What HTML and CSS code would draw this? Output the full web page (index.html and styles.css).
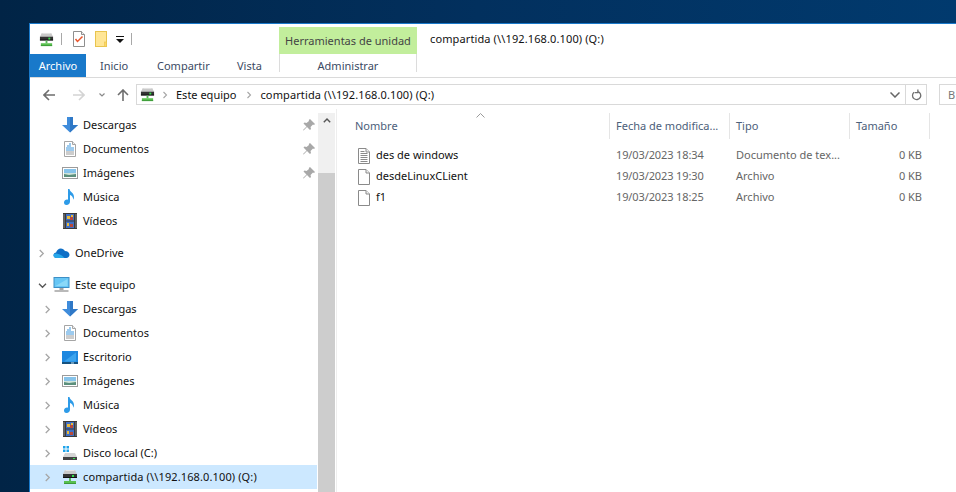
FILE: index.html
```html
<!DOCTYPE html>
<html lang="es">
<head>
    <meta charset="UTF-8">
    <title>compartida (\\192.168.0.100) (Q:)</title>
    <link rel="stylesheet" href="styles.css">
</head>
<body>
<svg class="sprite" xmlns="http://www.w3.org/2000/svg">
    <defs>
        <symbol id="i-net" viewBox="0 0 16 16">
            <path d="M3 1h10l2 4H1z" fill="#c9c9c9"/>
            <path d="M3.500 1.500h9" stroke="#e6e6e6"/>
            <rect x="1" y="5" width="14" height="4" fill="#333"/>
            <rect x="1" y="8" width="14" height="1" fill="#111"/>
            <rect x="10" y="6" width="2" height="2" fill="#35e04a"/>
            <rect x="7" y="9" width="2" height="3" fill="#5cb85c"/>
            <rect x="2" y="12" width="12" height="3" fill="#58c04e"/>
            <rect x="2" y="14" width="12" height="1" fill="#3d9a3a"/>
        </symbol>
        <symbol id="i-down" viewBox="0 0 16 16">
            <path d="M5 0h6v8h5l-8 7.500L0 8h5z" fill="#3f8cdb"/>
            <path d="M8 0h3v8h5l-8 7.500z" fill="#2f78c6"/>
        </symbol>
        <symbol id="i-docs" viewBox="0 0 16 16">
            <path d="M2.500.5h8l3 3v12h-11z" fill="#fff" stroke="#a5a5a5"/>
            <path d="M10.500.5v3h3" fill="#eee" stroke="#a5a5a5"/>
            <path d="M7 3h2M5 5h4M4 7h8M4 9h8" stroke="#3a96dd"/>
            <path d="M4 11h8M4 13h8" stroke="#9a9a9a"/>
        </symbol>
        <symbol id="i-img" viewBox="0 0 16 16">
            <rect x=".5" y="2.500" width="15" height="11" fill="#fff" stroke="#9b9b9b"/>
            <rect x="2" y="4" width="12" height="4" fill="#86c3ea"/>
            <rect x="2" y="8" width="12" height="2" fill="#cfe3da"/>
            <path d="M2 9l5 1 7-1v3H2z" fill="#5c8f7c"/>
        </symbol>
        <symbol id="i-music" viewBox="0 0 16 16">
            <path d="M6 0h1.500c.3 3 4.500 3.500 4.500 8 0 1-.3 2-.8 2.800.2-2.800-1.700-4.300-3.200-4.800v6.500c0 2-1.500 3.500-3.500 3.500S2 14.800 2 13.300s1.600-2.800 3-2.800c.4 0 .7 0 1 .2z" fill="#2d9be8"/>
        </symbol>
        <symbol id="i-film" viewBox="0 0 16 16">
            <rect x="1" y="0" width="14" height="16" fill="#3a3a3a"/>
            <path d="M2 1.500v13M14 1.500v13" stroke="#ddd" stroke-dasharray="1 1"/>
            <rect x="4" y="1" width="8" height="6.500" fill="#3f6fc4"/>
            <rect x="4" y="8.500" width="8" height="6.500" fill="#3f6fc4"/>
            <path d="M5 3h3v3H5zM9 2h2v2H9zM5 10h2v3H5z" fill="#e8b93a"/>
            <path d="M8 4h3v3H8zM8 11h3v3H8z" fill="#b8483a"/>
        </symbol>
        <symbol id="i-cloud" viewBox="0 0 16 16">
            <path d="M3 13C1.300 13 0 11.800 0 10.300 0 8.800 1.200 7.700 2.600 7.600 3.100 5.200 5 3.500 7.300 3.500c1.800 0 3.300.9 4.100 2.500C13.800 6 16 7.500 16 9.800 16 11.600 14.600 13 12.800 13z" fill="#0f6fc6"/>
            <path d="M3 13C1.300 13 0 11.800 0 10.300 0 9.300 1 8.500 2.600 8.500 5 8.500 9 10.500 11 13z" fill="#28a8ea"/>
        </symbol>
        <symbol id="i-pc" viewBox="0 0 16 16">
            <rect x=".5" y=".5" width="15" height="10" fill="#66c6f5" stroke="#3d8fc6"/>
            <path d="M2 9L14 2v7z" fill="#8ad8f8"/>
            <rect x="6" y="11" width="4" height="2" fill="#a5a5a5"/>
            <rect x="1" y="13" width="14" height="2" fill="#b9b9b9"/>
        </symbol>
        <symbol id="i-desk" viewBox="0 0 16 16">
            <rect x="0" y="2" width="16" height="12" fill="#1e88e0"/>
            <path d="M2 12.500L14 3.500v9z" fill="#3ba4ee"/>
            <rect x="0" y="13" width="16" height="2" fill="#15527f"/>
            <rect x="9" y="13.500" width="3" height="1" fill="#bfe0f5"/>
        </symbol>
        <symbol id="i-disk" viewBox="0 0 16 16">
            <path d="M1 1h2.500v2.500H1zM4.500 1H7v2.500H4.500zM1 4.500h2.500V7H1zM4.500 4.500H7V7H4.500z" fill="#1ea3ea"/>
            <path d="M3 8h10l2 4H1z" fill="#d4d4d4"/>
            <rect x="1" y="12" width="14" height="3" fill="#444"/>
            <rect x="11" y="13" width="2" height="1" fill="#35e04a"/>
        </symbol>
        <symbol id="i-pin" viewBox="0 0 12 12">
            <path d="M7 0l5 5-1 1-1-.500L7.500 8l.5 2-1 1-3-3-3.500 3.500L0 11l3.500-3.500-3-3 1-1 2 .500L6 2 5.800 1z" fill="#a8a8a8"/>
        </symbol>
        <symbol id="i-caret-r" viewBox="0 0 8 10">
            <path d="M2 1l4 4-4 4" fill="none" stroke="#a6a6a6" stroke-width="1.500"/>
        </symbol>
        <symbol id="i-caret-d" viewBox="0 0 10 8">
            <path d="M1 2l4 4 4-4" fill="none" stroke="#555" stroke-width="1.500"/>
        </symbol>
        <symbol id="i-text" viewBox="0 0 12 16">
            <path d="M.5.500h7.500l3.500 3.500v11.500H.5z" fill="#fff" stroke="#8a8a8a"/>
            <path d="M8 .5V4h3.500" fill="#f2f2f2" stroke="#8a8a8a"/>
            <path d="M2.500 3.500h4M2.500 5.500h7M2.500 7.500h7M2.500 9.500h7M2.500 11.500h7M2.500 13.500h7" stroke="#8a8a8a"/>
        </symbol>
        <symbol id="i-blank" viewBox="0 0 12 16">
            <path d="M.5.500h7.500l3.500 3.500v11.500H.5z" fill="#fff" stroke="#8a8a8a"/>
            <path d="M8 .5V4h3.500" fill="#f2f2f2" stroke="#8a8a8a"/>
        </symbol>
    </defs>
</svg>

<div class="window">
    <div class="titlebar">
        <div class="quick">
            <svg class="qa-net"><use href="#i-net"/></svg>
            <span class="qa-sep"></span>
            <svg class="qa-check" viewBox="0 0 12 16">
                <path d="M.5.500h8l3 3v12H.5z" fill="#fff" stroke="#8f8f8f"/>
                <path d="M8.500.5v3h3" fill="#eee" stroke="#8f8f8f"/>
                <path d="M2.500 8l2 2.500 5-5" fill="none" stroke="#e8552d" stroke-width="1.500"/>
            </svg>
            <svg class="qa-folder" viewBox="0 0 12 16">
                <rect x=".5" y=".5" width="11" height="15" fill="#ffe696" stroke="#e8c44e"/>
                <rect x="9.500" y="11" width="2" height="4.500" fill="#ffd863" stroke="#e8c44e" stroke-width=".6"/>
            </svg>
            <svg class="qa-drop" viewBox="0 0 8 7">
                <rect x="0" y="0" width="8" height="1" fill="#111"/>
                <path d="M0 3h8L4 7z" fill="#111"/>
            </svg>
            <span class="qa-sep qa-sep-last"></span>
        </div>
        <div class="context-title">Herramientas de unidad</div>
        <div class="window-title path-text">compartida (\\192.168.0.100) (Q:)</div>
    </div>

    <div class="tabs">
        <div class="tab tab-file">Archivo</div>
        <div class="tab tab-inicio">Inicio</div>
        <div class="tab tab-compartir">Compartir</div>
        <div class="tab tab-vista">Vista</div>
        <div class="tab tab-admin">Administrar</div>
    </div>

    <div class="navbar">
        <svg class="nav-arrow" viewBox="0 0 12 12"><path d="M12 6H1.500M6 1L1 6l5 5" fill="none" stroke="#6e6e6e" stroke-width="1.600"/></svg>
        <svg class="nav-arrow nav-forward" viewBox="0 0 12 12"><path d="M0 6h10.500M6 1l5 5-5 5" fill="none" stroke="#d4d4d4" stroke-width="1.600"/></svg>
        <svg class="nav-recent" viewBox="0 0 6 4"><path d="M.5.500L3 3 5.500.5" fill="none" stroke="#8a8a8a" stroke-width="1.200"/></svg>
        <svg class="nav-arrow nav-up" viewBox="0 0 12 12"><path d="M6 12V1.500M1 6l5-5 5 5" fill="none" stroke="#6e6e6e" stroke-width="1.600"/></svg>
        <div class="address">
            <svg class="addr-icon"><use href="#i-net"/></svg>
            <svg class="addr-caret"><use href="#i-caret-r"/></svg>
            <span class="addr-part">Este equipo</span>
            <svg class="addr-caret"><use href="#i-caret-r"/></svg>
            <span class="addr-part path-text">compartida (\\192.168.0.100) (Q:)</span>
            <svg class="addr-drop" viewBox="0 0 10 6"><path d="M.5.500L5 5 9.500.5" fill="none" stroke="#666" stroke-width="1.500"/></svg>
            <div class="addr-refresh">
                <svg viewBox="0 0 12 12"><path d="M7.500 2.200A4.500 4.500 0 1 1 3.300 3M7.500 0v3.500H4" fill="none" stroke="#6e6e6e" stroke-width="1.400"/></svg>
            </div>
        </div>
        <div class="search">B</div>
    </div>

    <div class="panes">
        <aside class="sidebar">
            <div class="tree">
                <div class="tree-item level2"><span class="caret-slot"></span><svg class="ico"><use href="#i-down"/></svg><span class="label">Descargas</span><svg class="pin"><use href="#i-pin"/></svg></div>
                <div class="tree-item level2"><span class="caret-slot"></span><svg class="ico"><use href="#i-docs"/></svg><span class="label">Documentos</span><svg class="pin"><use href="#i-pin"/></svg></div>
                <div class="tree-item level2"><span class="caret-slot"></span><svg class="ico"><use href="#i-img"/></svg><span class="label">Imágenes</span><svg class="pin"><use href="#i-pin"/></svg></div>
                <div class="tree-item level2"><span class="caret-slot"></span><svg class="ico"><use href="#i-music"/></svg><span class="label">Música</span></div>
                <div class="tree-item level2"><span class="caret-slot"></span><svg class="ico"><use href="#i-film"/></svg><span class="label">Vídeos</span></div>

                <div class="tree-item level1 group"><span class="caret-slot"><svg class="caret"><use href="#i-caret-r"/></svg></span><svg class="ico"><use href="#i-cloud"/></svg><span class="label">OneDrive</span></div>
                <div class="tree-item level1 group"><span class="caret-slot"><svg class="caret-open"><use href="#i-caret-d"/></svg></span><svg class="ico"><use href="#i-pc"/></svg><span class="label">Este equipo</span></div>

                <div class="tree-item level2"><span class="caret-slot"><svg class="caret"><use href="#i-caret-r"/></svg></span><svg class="ico"><use href="#i-down"/></svg><span class="label">Descargas</span></div>
                <div class="tree-item level2"><span class="caret-slot"><svg class="caret"><use href="#i-caret-r"/></svg></span><svg class="ico"><use href="#i-docs"/></svg><span class="label">Documentos</span></div>
                <div class="tree-item level2"><span class="caret-slot"><svg class="caret"><use href="#i-caret-r"/></svg></span><svg class="ico"><use href="#i-desk"/></svg><span class="label">Escritorio</span></div>
                <div class="tree-item level2"><span class="caret-slot"><svg class="caret"><use href="#i-caret-r"/></svg></span><svg class="ico"><use href="#i-img"/></svg><span class="label">Imágenes</span></div>
                <div class="tree-item level2"><span class="caret-slot"><svg class="caret"><use href="#i-caret-r"/></svg></span><svg class="ico"><use href="#i-music"/></svg><span class="label">Música</span></div>
                <div class="tree-item level2"><span class="caret-slot"><svg class="caret"><use href="#i-caret-r"/></svg></span><svg class="ico"><use href="#i-film"/></svg><span class="label">Vídeos</span></div>
                <div class="tree-item level2"><span class="caret-slot"><svg class="caret"><use href="#i-caret-r"/></svg></span><svg class="ico"><use href="#i-disk"/></svg><span class="label">Disco local (C:)</span></div>
                <div class="tree-item level2 selected"><span class="caret-slot"><svg class="caret"><use href="#i-caret-r"/></svg></span><svg class="ico"><use href="#i-net"/></svg><span class="label path-text">compartida (\\192.168.0.100) (Q:)</span></div>
            </div>
            <div class="scrollbar">
                <div class="scroll-track">
                    <svg class="scroll-up" viewBox="0 0 8 5"><path d="M.8 4.200L4 1l3.200 3.200" fill="none" stroke="#555" stroke-width="1.400"/></svg>
                </div>
                <div class="scroll-thumb"></div>
            </div>
        </aside>

        <main class="files">
            <div class="columns">
                <div class="col col-name">Nombre
                    <svg class="sort" viewBox="0 0 9 5"><path d="M.5 4.500L4.500.5l4 4" fill="none" stroke="#9a9a9a"/></svg>
                </div>
                <div class="col">Fecha de modifica...</div>
                <div class="col">Tipo</div>
                <div class="col">Tamaño</div>
            </div>
            <div class="file-list">
                <div class="file">
                    <div class="file-name"><svg class="file-ico"><use href="#i-text"/></svg><span class="label">des de windows</span></div>
                    <div class="file-meta file-date">19/03/2023 18:34</div>
                    <div class="file-meta">Documento de tex...</div>
                    <div class="file-meta file-size">0 KB</div>
                </div>
                <div class="file">
                    <div class="file-name"><svg class="file-ico"><use href="#i-blank"/></svg><span class="label">desdeLinuxCLient</span></div>
                    <div class="file-meta file-date">19/03/2023 19:30</div>
                    <div class="file-meta">Archivo</div>
                    <div class="file-meta file-size">0 KB</div>
                </div>
                <div class="file">
                    <div class="file-name"><svg class="file-ico"><use href="#i-blank"/></svg><span class="label">f1</span></div>
                    <div class="file-meta file-date">19/03/2023 18:25</div>
                    <div class="file-meta">Archivo</div>
                    <div class="file-meta file-size">0 KB</div>
                </div>
            </div>
        </main>
    </div>
</div>
</body>
</html>
```

FILE: styles.css
```css
html, body {
    width: 100%;
    height: 100%;
}

body {
    margin: 0;
    padding: 23px 0 0 29px;
    box-sizing: border-box;
    overflow: hidden;
    background: linear-gradient(90deg, #012446 0%, #02305e 50%, #013a6e 100%);
    font-family: "Noto Sans", "Open Sans", sans-serif;
    font-size: 11px;
    color: #1a1a1a;
    display: flex;
}

svg {
    display: block;
    flex: none;
}

.sprite {
    width: 0;
    height: 0;
}

.path-text {
    letter-spacing: 0.12px;
}

.window {
    flex: 1;
    min-width: 0;
    background: #fff;
    border-top: 1px solid #1979ca;
    border-left: 1px solid #1979ca;
    display: flex;
    flex-direction: column;
    overflow: hidden;
}

/* title row */
.titlebar {
    height: 30px;
    display: flex;
    flex: none;
}

.quick {
    width: 249px;
    display: flex;
    align-items: center;
    padding: 0 0 0 9px;
    box-sizing: border-box;
}

.qa-net {
    width: 15px;
    height: 15px;
}

.qa-sep {
    width: 1px;
    height: 12px;
    background: #a8a8a8;
    margin: 0 11px 0 7px;
}

.qa-check {
    width: 12px;
    height: 16px;
    margin-right: 10px;
}

.qa-folder {
    width: 12px;
    height: 16px;
    margin-right: 9px;
}

.qa-drop {
    width: 8px;
    height: 7px;
}

.qa-sep-last {
    margin-left: 7px;
}

.context-title {
    width: 138px;
    margin-top: 3px;
    background: #c2ee9c;
    color: #444;
    text-align: center;
    line-height: 27px;
    white-space: nowrap;
}

.window-title {
    padding-left: 13px;
    line-height: 30px;
    white-space: nowrap;
    color: #111;
}

/* ribbon tabs */
.tabs {
    height: 24px;
    box-sizing: border-box;
    flex: none;
    display: flex;
    border-bottom: 1px solid #dadada;
}

.tab {
    line-height: 24px;
    color: #3b4a63;
    padding-left: 14px;
    box-sizing: border-box;
    flex: none;
}

.tab-file {
    width: 56px;
    padding: 0;
    background: #1979ca;
    color: #fff;
    text-align: center;
}

.tab-inicio {
    width: 57px;
}

.tab-compartir {
    width: 80px;
}

.tab-vista {
    width: 56px;
}

.tab-admin {
    width: 138px;
    padding: 0;
    text-align: center;
    height: 18px;
    line-height: 24px;
    border-left: 1px solid #dcdcdc;
    border-right: 1px solid #dcdcdc;
}

/* address row */
.navbar {
    height: 31px;
    box-sizing: border-box;
    flex: none;
    display: flex;
    align-items: center;
    padding: 2px 0 0 13px;
}

.nav-arrow {
    width: 12px;
    height: 12px;
}

.nav-forward {
    margin-left: 18px;
}

.nav-recent {
    width: 6px;
    height: 4px;
    margin: 0 12px 0 14px;
}

.nav-up {
    margin-right: 7px;
}

.address {
    width: 791px;
    flex: none;
    height: 21px;
    box-sizing: border-box;
    border: 1px solid #d9d9d9;
    display: flex;
    align-items: center;
    padding-left: 3px;
}

.addr-icon {
    width: 15px;
    height: 15px;
}

.addr-caret {
    width: 6px;
    height: 8px;
    margin: 0 8px 0 7px;
}

.addr-part + .addr-caret {
    margin-left: 10px;
}

.addr-part {
    white-space: nowrap;
    color: #111;
}

.addr-drop {
    width: 10px;
    height: 6px;
    margin-left: auto;
}

.addr-refresh {
    width: 20px;
    height: 19px;
    margin-left: 5px;
    border-left: 1px solid #d9d9d9;
    display: flex;
    align-items: center;
    justify-content: center;
}

.addr-refresh svg {
    width: 11px;
    height: 12px;
}

.search {
    width: 40px;
    flex: none;
    height: 21px;
    box-sizing: border-box;
    margin-left: 12px;
    border: 1px solid #d9d9d9;
    padding-left: 8px;
    line-height: 19px;
    color: #777;
}

/* panes */
.panes {
    flex: 1;
    min-height: 0;
    display: flex;
}

.sidebar {
    width: 307px;
    flex: none;
    display: flex;
    padding-top: 4px;
    box-sizing: border-box;
    border-right: 1px solid #eee;
}

.tree {
    width: 287px;
    flex: none;
    margin-right: 1px;
}

.tree-item {
    height: 24px;
    display: flex;
    align-items: center;
    color: #111;
    white-space: nowrap;
}

/* Noto sits a pixel low in the row, pull the text up */
.label {
    margin-bottom: 2px;
}

.level1 {
    padding-left: 5px;
}

.level2 {
    padding-left: 14px;
}

.group {
    margin-top: 8px;
}

.caret-slot {
    width: 18px;
    flex: none;
    display: flex;
}

.level1 .caret-slot {
    padding-left: 3px;
    width: 15px;
}

.level1 .ico {
    width: 17px;
}

.caret {
    width: 7px;
    height: 9px;
}

.caret-open {
    width: 9px;
    height: 7px;
}

.ico {
    width: 16px;
    height: 16px;
    margin-right: 5px;
}

.pin {
    width: 12px;
    height: 12px;
    margin-left: auto;
    margin-right: 2px;
}

.selected {
    background: #cce8ff;
}

.scrollbar {
    width: 17px;
    flex: none;
    display: flex;
    flex-direction: column;
}

.scroll-track {
    height: 60px;
    background: #f0f0f0;
    flex: none;
}

.scroll-up {
    width: 8px;
    height: 5px;
    margin: 5px auto 0;
}

.scroll-thumb {
    flex: 1;
    background: #cdcdcd;
}

/* file list */
.files {
    flex: 1;
    min-width: 0;
    padding-top: 4px;
}

.columns {
    display: grid;
    grid-template-columns: 273px 120px 120px 80px;
    height: 25px;
}

.col {
    position: relative;
    border-right: 1px solid #e5e5e5;
    padding-left: 6px;
    line-height: 26px;
    color: #4c607a;
    white-space: nowrap;
}

.col-name {
    padding-left: 18px;
}

.sort {
    position: absolute;
    left: 139px;
    top: 0;
    width: 9px;
    height: 5px;
}

.file-list {
    padding-top: 7px;
}

.file {
    display: grid;
    grid-template-columns: 273px 120px 120px 72px;
    height: 21px;
}

.file-name {
    display: flex;
    align-items: center;
    gap: 6px;
    padding-left: 21px;
    color: #111;
}

.file-ico {
    width: 12px;
    height: 16px;
}

.file-meta {
    padding-left: 6px;
    color: #666;
    white-space: nowrap;
    line-height: 19px;
}

.file-date {
    letter-spacing: -0.12px;
}

.file-size {
    text-align: right;
}
```
